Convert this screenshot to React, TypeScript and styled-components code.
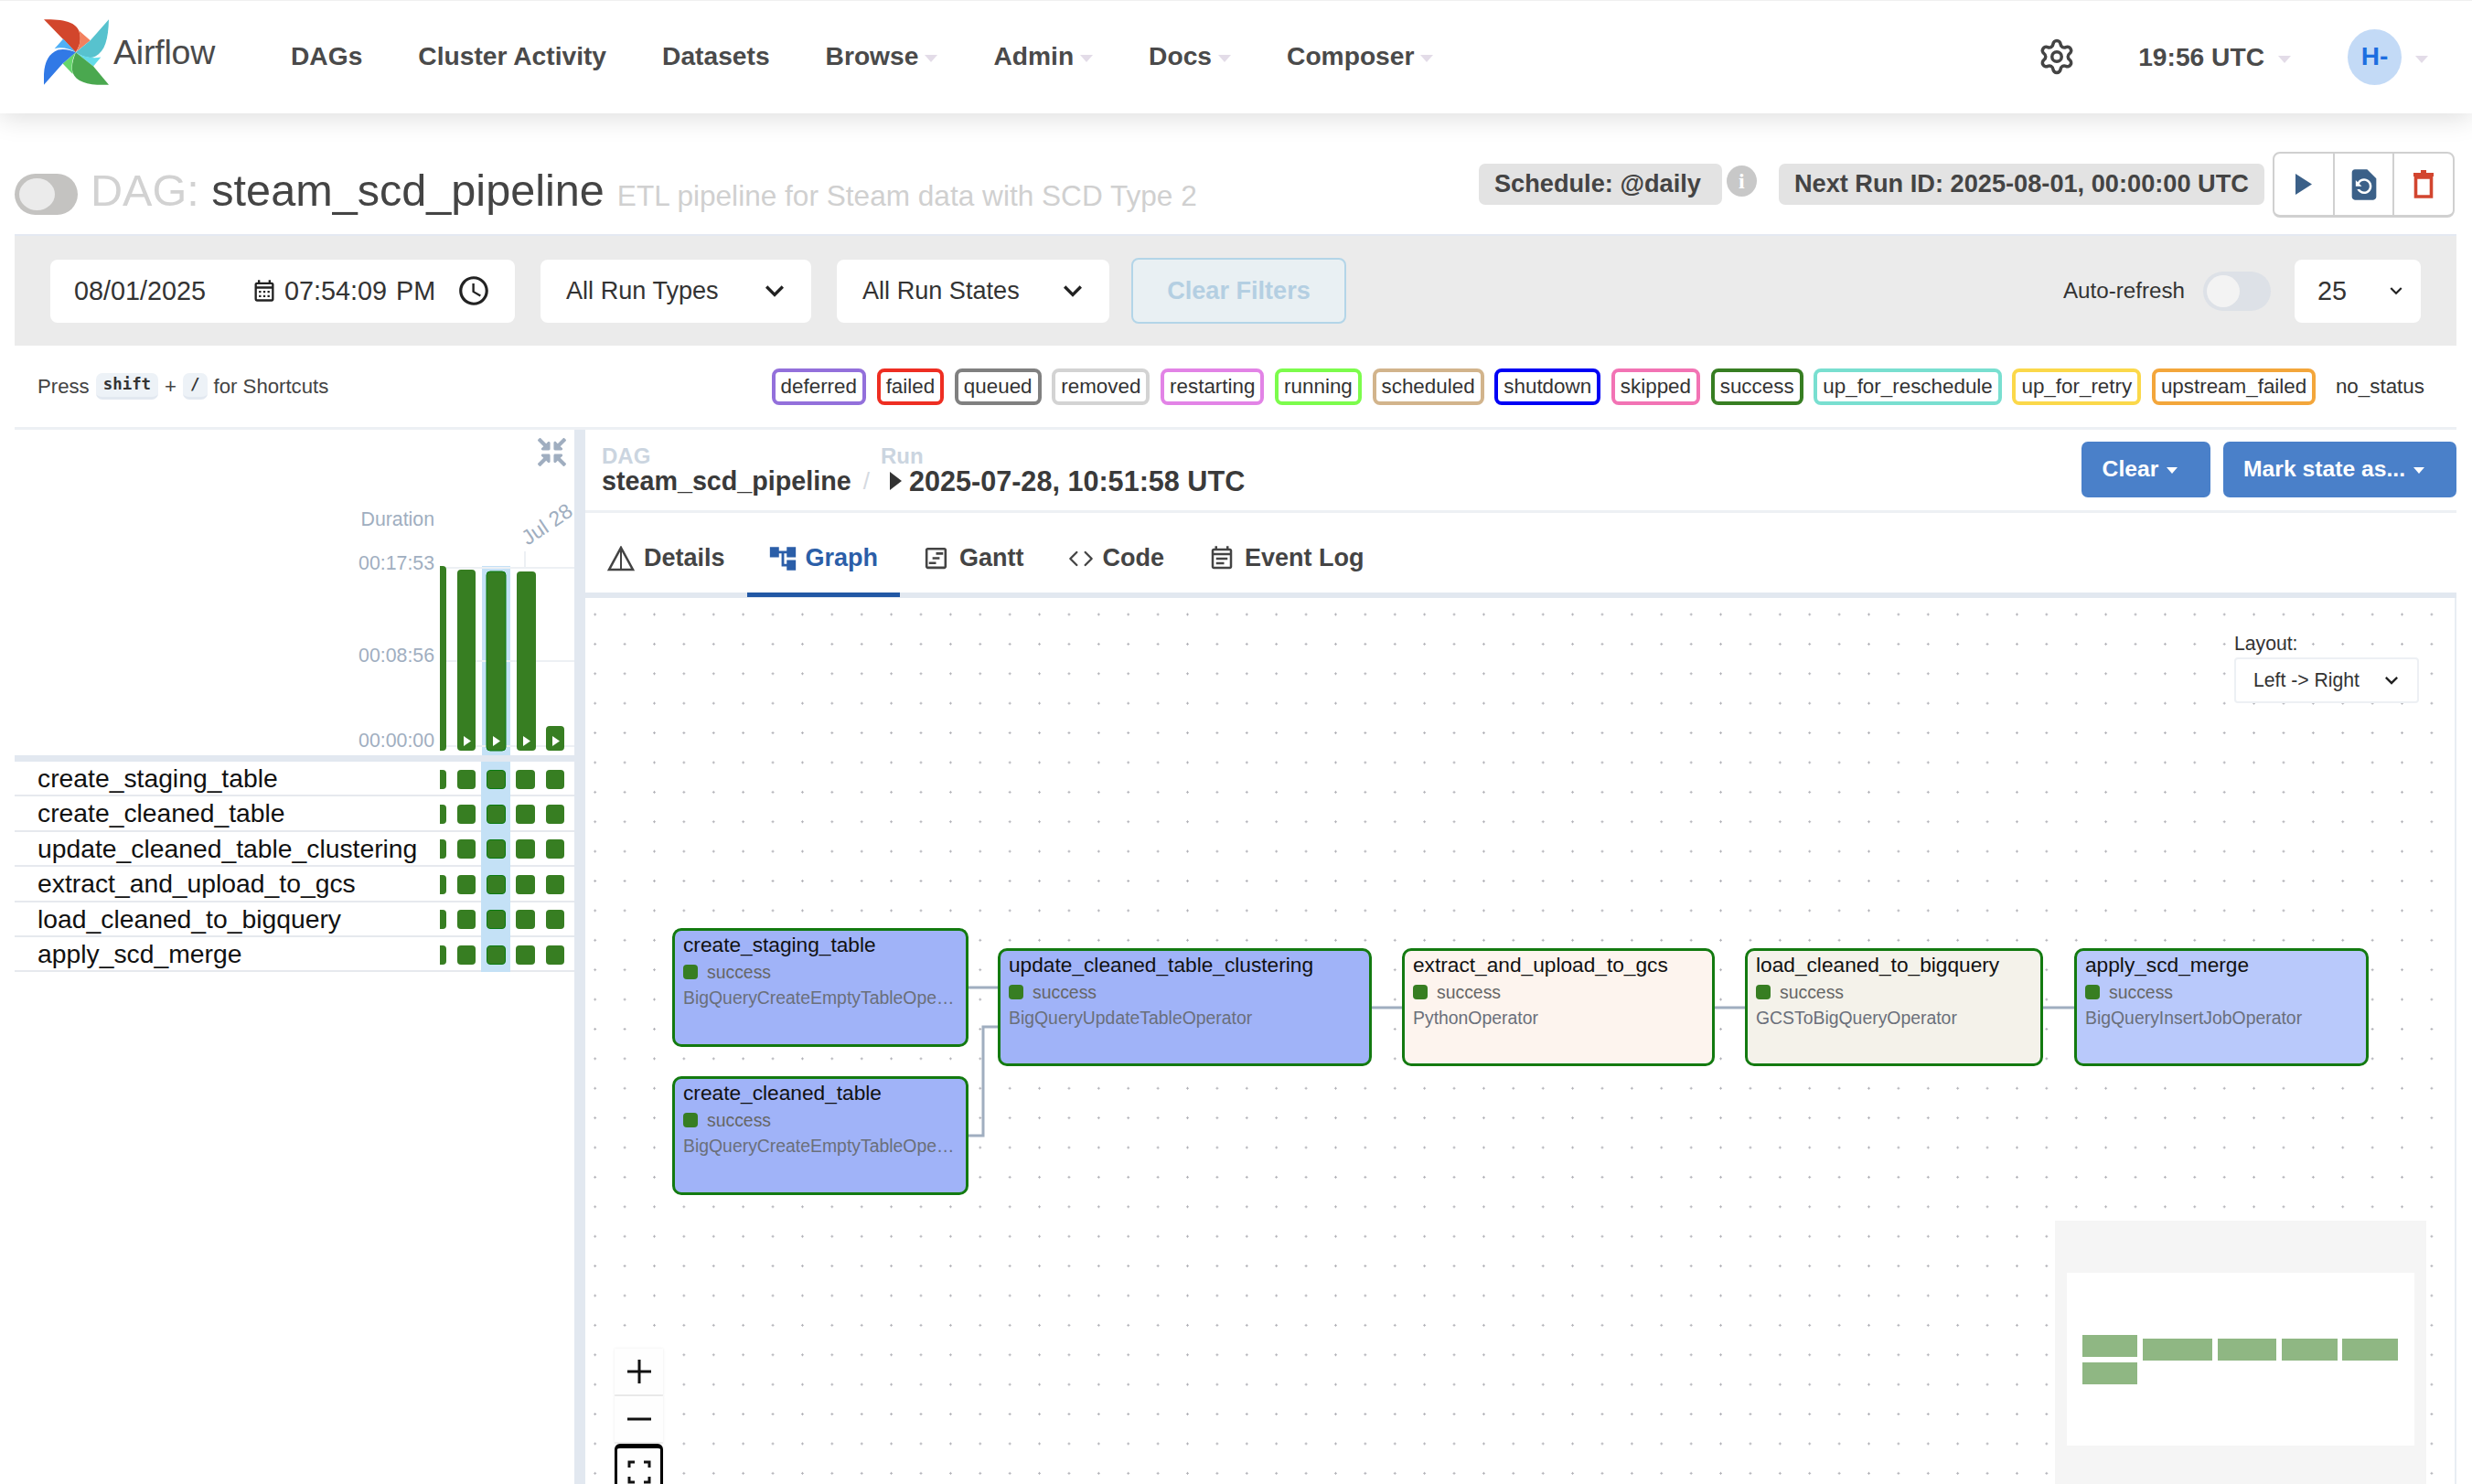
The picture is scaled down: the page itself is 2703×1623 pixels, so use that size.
import React from 'react';
import styled, { createGlobalStyle } from 'styled-components';
import { Settings } from 'lucide-react';
import { FaCompressArrowsAlt } from 'react-icons/fa';
import { FiCode } from 'react-icons/fi';
import {
  MdAccountTree,
  MdOutlineAccessTime,
  MdOutlineCalendarMonth,
  MdOutlineEventNote,
  MdOutlineViewTimeline,
  MdRestorePage,
  MdKeyboardArrowDown,
} from 'react-icons/md';

const GlobalStyle = createGlobalStyle`
  html, body {
    margin: 0;
    padding: 0;
    background: #fff;
    font-family: "Liberation Sans", Arial, sans-serif;
    color: #444;
  }
  * { box-sizing: border-box; }
`;

const Page = styled.div`
  width: 2703px;
  height: 1623px;
  overflow: hidden;
  display: flex;
  flex-direction: column;
`;

const Nav = styled.header`
  height: 124px;
  flex: none;
  display: flex;
  align-items: center;
  padding-left: 48px;
  background: #fff;
  box-shadow: 0 4px 28px rgba(0, 0, 0, 0.14);
  border-top: 1px solid #f0f0f0;
  position: relative;
`;

const Brand = styled.div`
  width: 270px;
  display: flex;
  align-items: center;
  gap: 5px;
  margin-top: -11px;
  font-size: 37.5px;
  color: #4a4a4a;
  letter-spacing: -0.2px;
`;

const NavList = styled.nav`
  display: flex;
  gap: 61px;
  margin-top: -3px;
`;

const NavItem = styled.div`
  display: flex;
  align-items: center;
  font-size: 28.2px;
  font-weight: 700;
  color: #4a4a4a;
`;

const Caret = styled.i`
  display: inline-block;
  width: 0;
  height: 0;
  margin-left: 7px;
  margin-top: 6px;
  border-left: 7px solid transparent;
  border-right: 7px solid transparent;
  border-top: 8px solid #e3dce8;
`;

const NavRight = styled.div`
  margin-left: auto;
  padding-right: 48px;
  display: flex;
  align-items: center;
  margin-top: -1px;
`;

const Clock = styled.div`
  margin-left: 68px;
  display: flex;
  align-items: center;
  font-size: 28.2px;
  font-weight: 700;
  color: #4a4a4a;
  ${Caret} { margin-left: 15px; }
`;

const Avatar = styled.div`
  width: 59px;
  height: 61px;
  margin-left: 62px;
  border-radius: 50%;
  background: #c3daf6;
  color: #1c6ee0;
  font-size: 28px;
  font-weight: 700;
  display: flex;
  align-items: center;
  justify-content: center;
`;

const AvatarCaret = styled(Caret)`
  margin-left: 15px;
`;

const Content = styled.main`
  flex: 1;
  min-height: 0;
  display: flex;
  flex-direction: column;
  padding: 0 17px 0 16px;
`;

const TitleRow = styled.section`
  height: 132px;
  flex: none;
  display: flex;
  align-items: flex-start;
  justify-content: space-between;
`;

const TitleLeft = styled.div`
  display: flex;
  align-items: center;
  height: 60px;
  margin-top: 54px;
`;

const PauseToggle = styled.div`
  width: 69px;
  height: 45px;
  border-radius: 23px;
  background: #c4c3c1;
  padding: 5px;
  margin-right: 14px;
  margin-top: 8px;
  &::before {
    content: '';
    display: block;
    width: 39px;
    height: 35px;
    border-radius: 50%;
    background: #ebebeb;
  }
`;

const Heading = styled.h1`
  margin: 0;
  font-size: 48.6px;
  font-weight: 400;
  color: #444;
  white-space: nowrap;
  span { color: #d2d2d2; }
`;

const Subtitle = styled.small`
  margin-left: 14px;
  margin-top: 12px;
  font-size: 31.6px;
  color: #d0d0d0;
  white-space: nowrap;
`;

const TitleRight = styled.div`
  display: flex;
  align-items: flex-start;
  margin-top: 42px;
  margin-right: 2px;
`;

const Pill = styled.div<{ $trail?: number }>`
  height: 45px;
  margin-top: 13px;
  padding: 0 ${p => p.$trail ?? 17}px 2px 17px;
  border-radius: 7px;
  background: #e3e3e3;
  color: #444;
  font-size: 27.2px;
  font-weight: 700;
  display: flex;
  align-items: center;
  white-space: nowrap;
`;

const InfoDot = styled.div`
  width: 33px;
  height: 34px;
  margin: 15px 24px 0 5px;
  border-radius: 50%;
  background: #c8c8c8;
  color: #fff;
  font-size: 24px;
  font-family: "Liberation Serif", serif;
  font-weight: 700;
  display: flex;
  align-items: center;
  justify-content: center;
`;

const ActionGroup = styled.div`
  margin-left: 9px;
  width: 199px;
  height: 72px;
  display: flex;
  border: 2px solid #d0d0d0;
  border-bottom-width: 3px;
  border-radius: 8px;
`;

const ActionButton = styled.div`
  flex: 1;
  display: flex;
  align-items: center;
  justify-content: center;
  & + & { border-left: 2px solid #d0d0d0; }
`;

const FilterBar = styled.section`
  height: 122px;
  flex: none;
  display: flex;
  align-items: center;
  padding: 0 39px;
  background: #ebebeb;
  border-top: 2px solid #e4e9f2;
`;

const DateField = styled.div`
  width: 508px;
  height: 69px;
  padding-left: 26px;
  border-radius: 8px;
  background: #fff;
  color: #333;
  font-size: 28.8px;
  display: flex;
  align-items: center;
  svg { flex: none; color: #222; }
`;

const DateText = styled.span`
  width: 194px;
`;

const TimeText = styled.span`
  width: 188px;
  margin-left: 8px;
  word-spacing: 2px;
`;

const SelectBox = styled.div<{ $width: number }>`
  width: ${p => p.$width}px;
  height: 69px;
  margin-left: 28px;
  padding: 0 20px 0 28px;
  border-radius: 8px;
  background: #fff;
  color: #333;
  font-size: 27.1px;
  display: flex;
  align-items: center;
  justify-content: space-between;
`;

const ClearFilters = styled.button`
  width: 235px;
  height: 72px;
  margin-left: 24px;
  border: 2px solid #b3d5e8;
  border-radius: 8px;
  background: #e9f0f3;
  color: #b4cfe2;
  font-family: inherit;
  font-size: 27.1px;
  font-weight: 700;
`;

const AutoRefresh = styled.div`
  margin-left: auto;
  display: flex;
  align-items: center;
  font-size: 24.2px;
  color: #333;
`;

const AutoSwitch = styled.div`
  width: 74px;
  height: 43px;
  margin-left: 20px;
  padding: 4px;
  border-radius: 22px;
  background: #dde1e7;
  &::before {
    content: '';
    display: block;
    width: 36px;
    height: 35px;
    border-radius: 50%;
    background: #f3f3f3;
  }
`;

const PageSize = styled.div`
  width: 138px;
  height: 69px;
  margin-left: 26px;
  padding: 0 14px 0 25px;
  border-radius: 8px;
  background: #fff;
  color: #333;
  font-size: 28.8px;
  display: flex;
  align-items: center;
  justify-content: space-between;
`;

const LegendRow = styled.section`
  height: 92px;
  flex: none;
  display: flex;
  align-items: center;
  justify-content: space-between;
  padding: 0 25px 0 25px;
  border-bottom: 3px solid #edf0f4;
`;

const Shortcuts = styled.div`
  display: flex;
  align-items: center;
  gap: 7px;
  font-size: 22.2px;
  color: #444;
`;

const Kbd = styled.kbd`
  padding: 2px 8px 4px;
  border-radius: 7px;
  background: #edf2f7;
  border-bottom: 3px solid #e2e8f0;
  font-family: "DejaVu Sans Mono", monospace;
  font-size: 17.4px;
  font-weight: 700;
  color: #333;
`;

const Legend = styled.div`
  display: flex;
  align-items: center;
  gap: 11.7px;
`;

const Chip = styled.span<{ $color?: string }>`
  height: 40px;
  padding: 0 6px;
  border: 4px solid ${p => p.$color ?? 'transparent'};
  border-radius: 8px;
  font-size: 22.4px;
  color: #333;
  display: flex;
  align-items: center;
`;

const Main = styled.section`
  flex: 1;
  min-height: 0;
  display: flex;
`;

const LeftPanel = styled.aside`
  width: 612px;
  flex: none;
  display: flex;
  flex-direction: column;
`;

const ChartArea = styled.div`
  height: 363px;
  flex: none;
  position: relative;
  border-bottom: 7px solid #e2e8f0;
  svg.chart { display: block; }
`;

const CollapseIcon = styled.div`
  position: absolute;
  top: 9px;
  right: 9px;
  color: #a0aec0;
  line-height: 0;
`;

const TaskRow = styled.div`
  height: 38.4px;
  flex: none;
  display: flex;
  justify-content: space-between;
  padding-left: 25px;
  padding-right: 5px;
  border-bottom: 2px solid #e6e9ee;
`;

const TaskName = styled.span`
  font-size: 28.3px;
  line-height: 36px;
  color: #111;
`;

const Cells = styled.div`
  width: 142px;
  display: flex;
  justify-content: flex-end;
  overflow: hidden;
  margin-bottom: -2px;
`;

const Cell = styled.div<{ $active?: boolean }>`
  width: 32.3px;
  flex: none;
  display: flex;
  align-items: center;
  justify-content: center;
  background: ${p => (p.$active ? '#c4e1f6' : 'transparent')};
`;

const Square = styled.div<{ $active?: boolean }>`
  width: 20.5px;
  height: 21px;
  border-radius: 4px;
  background: #377e22;
  border: ${p => (p.$active ? '1px solid #0a7a10' : 'none')};
`;

const PanelDivider = styled.div`
  width: 12px;
  flex: none;
  background: #e2e8f0;
`;

const RightPanel = styled.div`
  flex: 1;
  min-width: 0;
  display: flex;
  flex-direction: column;
`;

const RunHeader = styled.div`
  height: 91px;
  flex: none;
  display: flex;
  align-items: center;
  justify-content: space-between;
  padding-left: 18px;
  border-bottom: 3px solid #edf0f4;
`;

const Crumbs = styled.div`
  display: flex;
  margin-top: 1px;
`;

const Crumb = styled.div`
  display: flex;
  flex-direction: column;
`;

const CrumbLabel = styled.span`
  font-size: 24px;
  line-height: 25px;
  margin-bottom: -2px;
  font-weight: 700;
  color: #cbd5e0;
`;

const CrumbValue = styled.span`
  font-size: 28.7px;
  line-height: 35px;
  font-weight: 700;
  color: #3a3a3a;
  display: flex;
  align-items: center;
  white-space: nowrap;
`;

const RunDate = styled.span`
  font-size: 30.6px;
`;

const CrumbSlash = styled.span`
  align-self: flex-end;
  margin: 0 12px 0 13px;
  font-size: 26px;
  line-height: 35px;
  color: #d5dae1;
`;

const RunArrow = styled.i`
  width: 0;
  height: 0;
  margin: 0 8px 0 10px;
  border-top: 10px solid transparent;
  border-bottom: 10px solid transparent;
  border-left: 13px solid #333;
`;

const RunActions = styled.div`
  display: flex;
  gap: 14px;
  margin-top: -2px;
`;

const BlueButton = styled.button<{ $width: number }>`
  width: ${p => p.$width}px;
  height: 61px;
  padding: 0 13px 0 0;
  border: 0;
  border-radius: 7px;
  background: #4a80c9;
  color: #fff;
  font-family: inherit;
  font-size: 24.7px;
  font-weight: 700;
  display: flex;
  align-items: center;
  justify-content: center;
  ${Caret} {
    margin-left: 9px;
    margin-top: 3px;
    border-left-width: 6px;
    border-right-width: 6px;
    border-top: 7px solid #fff;
  }
`;

const Tabs = styled.div`
  height: 93px;
  flex: none;
  display: flex;
  border-bottom: 6px solid #e2e8f0;
`;

const Tab = styled.div<{ $active?: boolean }>`
  height: 92px;
  padding: 12px 24px 0 26px;
  display: flex;
  align-items: center;
  gap: 12px;
  font-size: 27px;
  font-weight: 700;
  color: ${p => (p.$active ? '#2b5ea8' : '#444')};
  border-bottom: 5px solid ${p => (p.$active ? '#2258a5' : 'transparent')};
  svg { margin: 0 -2px; }
`;

const TreeIcon = styled(MdAccountTree)`
  && { margin: 0 -4px; }
`;

const Canvas = styled.div`
  flex: 1;
  min-height: 0;
  position: relative;
  overflow: hidden;
  margin-left: 2px;
  border-right: 2px solid #e8edf3;
  background-color: #fff;
  background-image: radial-gradient(circle, #b1b1b7 1.1px, transparent 1.3px);
  background-size: 32.4px 32.4px;
  background-position: -7.5px 1.8px;
`;

const EdgeLayer = styled.svg`
  position: absolute;
  inset: 0;
`;

const NodeBox = styled.div<{ $fill: string }>`
  position: absolute;
  padding: 1px 9px;
  border: 3px solid #137a10;
  border-radius: 10px;
  background: ${p => p.$fill};
  color: #111;
  overflow: hidden;
`;

const NodeTitle = styled.div`
  font-size: 22.7px;
  line-height: 28px;
  white-space: nowrap;
`;

const NodeState = styled.div`
  display: flex;
  align-items: center;
  gap: 10px;
  margin-top: 2px;
  height: 28px;
  font-size: 19.4px;
  color: #666;
  &::before {
    content: '';
    width: 16px;
    height: 16px;
    border-radius: 4px;
    background: #377e22;
  }
`;

const NodeOperator = styled.div`
  font-size: 19.4px;
  line-height: 28px;
  color: #6a6f7a;
  white-space: nowrap;
  overflow: hidden;
  text-overflow: ellipsis;
`;

const LayoutControl = styled.div`
  position: absolute;
  top: 38px;
  left: 1801px;
  font-size: 21.2px;
  color: #333;
`;

const LayoutSelect = styled.div`
  width: 202px;
  height: 50px;
  margin-top: 3px;
  padding: 0 14px 0 19px;
  border: 2px solid #edf0f4;
  border-radius: 4px;
  background: #fff;
  display: flex;
  align-items: center;
  justify-content: space-between;
`;

const ZoomControls = styled.div`
  position: absolute;
  left: 30px;
  top: 821px;
  width: 53px;
  display: flex;
  flex-direction: column;
`;

const ZoomButton = styled.div<{ $focus?: boolean }>`
  height: 52px;
  display: flex;
  align-items: center;
  justify-content: center;
  background: #fefefe;
  border-bottom: 2px solid #eee;
  box-shadow: 0 0 3px rgba(0, 0, 0, 0.08);
  ${p => p.$focus && 'height: 60px; border: 3px solid #000; border-top-width: 5px; border-radius: 6px;'}
`;

const MiniMap = styled.svg`
  position: absolute;
  left: 1605px;
  top: 681px;
`;

const Logo = () => (
  <svg width="71" height="72" viewBox="143 60 214 215">
    <path d="M143 60C205 60 255 65 262 110C266 135 258 150 248 168Z" fill="#d2462c" />
    <path d="M258 96L296 129L250 166C262 145 266 120 258 96Z" fill="#f3815f" />
    <path d="M357 60C355 125 345 165 312 182C290 192 268 180 248 168L296 129Z" fill="#57c2ce" />
    <path d="M248 168C270 182 300 190 331 184L306 214Z" fill="#64dcea" />
    <path d="M357 275C295 278 250 268 238 235C232 212 240 190 248 168L306 214Z" fill="#4aa84f" />
    <path d="M248 168C236 190 232 215 238 240L205 205Z" fill="#66d66c" />
    <path d="M143 275C140 215 150 175 190 160C212 155 232 162 248 168L205 205Z" fill="#3179e6" />
    <path d="M248 168C225 155 200 150 178 156L207 124Z" fill="#4fb0f6" />
  </svg>
);

const legend: [string, string | undefined][] = [
  ['deferred', '#9370db'],
  ['failed', '#ee2e22'],
  ['queued', '#808080'],
  ['removed', '#d3d3d3'],
  ['restarting', '#e283e6'],
  ['running', '#7cfc4c'],
  ['scheduled', '#d2b48c'],
  ['shutdown', '#0000f5'],
  ['skipped', '#f273b4'],
  ['success', '#377e22'],
  ['up_for_reschedule', '#79dfd0'],
  ['up_for_retry', '#fbd84a'],
  ['upstream_failed', '#f3a63b'],
  ['no_status', undefined],
];

const tasks = [
  'create_staging_table',
  'create_cleaned_table',
  'update_cleaned_table_clustering',
  'extract_and_upload_to_gcs',
  'load_cleaned_to_bigquery',
  'apply_scd_merge',
];

const nodes = [
  { name: 'create_staging_table', op: 'BigQueryCreateEmptyTableOperator', x: 93, y: 361, w: 324, h: 130, fill: '#a0b3f8' },
  { name: 'create_cleaned_table', op: 'BigQueryCreateEmptyTableOperator', x: 93, y: 523, w: 324, h: 130, fill: '#a0b3f8' },
  { name: 'update_cleaned_table_clustering', op: 'BigQueryUpdateTableOperator', x: 449, y: 383, w: 409, h: 129, fill: '#a0b3f8' },
  { name: 'extract_and_upload_to_gcs', op: 'PythonOperator', x: 891, y: 383, w: 342, h: 129, fill: '#fdf4ee' },
  { name: 'load_cleaned_to_bigquery', op: 'GCSToBigQueryOperator', x: 1266, y: 383, w: 326, h: 129, fill: '#f4f2ea' },
  { name: 'apply_scd_merge', op: 'BigQueryInsertJobOperator', x: 1626, y: 383, w: 322, h: 129, fill: '#b9c9fb' },
];

const edges = [
  'M416 426H450',
  'M416 588H433V469H450',
  'M856 448H891',
  'M1231 448H1267',
  'M1591 448H1627',
];

const bars = [
  { x: 465, w: 23, y: 619, active: false },
  { x: 500, w: 20, y: 623, active: false },
  { x: 532, w: 21, y: 625, active: true },
  { x: 565, w: 21, y: 625, active: false },
  { x: 597, w: 20, y: 794, active: false },
];

// top of the svg sits at y=470 on the page, left at x=16
const DurationChart = () => (
  <svg className="chart" width="612" height="356" viewBox="16 470 612 356">
    <rect x="527" y="619" width="31" height="207" fill="#c4e1f6" />
    {[621, 723, 816].map(y => (
      <line key={y} x1="481" x2="628" y1={y} y2={y} stroke="#edf0f4" strokeWidth="2" />
    ))}
    <line x1="574" x2="574" y1="603" y2="621" stroke="#edf0f4" strokeWidth="2" />
    <g fill="#a0aec0" fontSize="21.3" textAnchor="end">
      <text x="475" y="575">Duration</text>
      <text x="475" y="623">00:17:53</text>
      <text x="475" y="724">00:08:56</text>
      <text x="475" y="817">00:00:00</text>
    </g>
    <clipPath id="barsClip"><rect x="481" y="600" width="147" height="226" /></clipPath>
    <g clipPath="url(#barsClip)">
      {bars.map(b => (
        <g key={b.x}>
          <rect x={b.x} y={b.y} width={b.w} height={821 - b.y} rx="4" fill="#377e22" stroke={b.active ? '#0a7a10' : 'none'} />
          {b.x > 480 && <path d={`M${b.x + 7} 805V816L${b.x + 15} 810.5Z`} fill="#fff" />}
        </g>
      ))}
    </g>
    <text x="0" y="0" fill="#a0aec0" fontSize="23" transform="translate(577 597) rotate(-34)">Jul 28,</text>
  </svg>
);

export default function App() {
  return (
    <Page>
      <GlobalStyle />
      <Nav>
        <Brand>
          <Logo />
          <span>Airflow</span>
        </Brand>
        <NavList>
          <NavItem>DAGs</NavItem>
          <NavItem>Cluster Activity</NavItem>
          <NavItem>Datasets</NavItem>
          <NavItem>Browse<Caret /></NavItem>
          <NavItem>Admin<Caret /></NavItem>
          <NavItem>Docs<Caret /></NavItem>
          <NavItem>Composer<Caret /></NavItem>
        </NavList>
        <NavRight>
          <Settings size={42} color="#444" strokeWidth={2} />
          <Clock>19:56 UTC<Caret /></Clock>
          <Avatar>H-</Avatar>
          <AvatarCaret />
        </NavRight>
      </Nav>
      <Content>
        <TitleRow>
          <TitleLeft>
            <PauseToggle />
            <Heading><span>DAG: </span>steam_scd_pipeline</Heading>
            <Subtitle>ETL pipeline for Steam data with SCD Type 2</Subtitle>
          </TitleLeft>
          <TitleRight>
            <Pill $trail={23}>Schedule: @daily</Pill>
            <InfoDot>i</InfoDot>
            <Pill>Next Run ID: 2025-08-01, 00:00:00 UTC</Pill>
            <ActionGroup>
              <ActionButton>
                <svg width="18" height="23" viewBox="0 0 18 23"><path d="M0 0L18 11.5L0 23Z" fill="#3b6088" /></svg>
              </ActionButton>
              <ActionButton><MdRestorePage size={40} color="#3b6088" /></ActionButton>
              <ActionButton>
                <svg width="22" height="31" viewBox="0 0 22 31">
                  <path d="M2.5 8H19.5V29H2.5Z" fill="none" stroke="#d2452f" strokeWidth="3.6" />
                  <path d="M0 3H22V7H0ZM8 0H14V3H8Z" fill="#d2452f" />
                </svg>
              </ActionButton>
            </ActionGroup>
          </TitleRight>
        </TitleRow>
        <FilterBar>
          <DateField>
            <DateText>08/01/2025</DateText>
            <MdOutlineCalendarMonth size={28} />
            <TimeText>07:54:09 PM</TimeText>
            <MdOutlineAccessTime size={38} />
          </DateField>
          <SelectBox $width={296}>All Run Types<MdKeyboardArrowDown size={40} color="#222" /></SelectBox>
          <SelectBox $width={298}>All Run States<MdKeyboardArrowDown size={40} color="#222" /></SelectBox>
          <ClearFilters>Clear Filters</ClearFilters>
          <AutoRefresh>Auto-refresh<AutoSwitch /></AutoRefresh>
          <PageSize>25<MdKeyboardArrowDown size={26} color="#222" /></PageSize>
        </FilterBar>
        <LegendRow>
          <Shortcuts>
            Press <Kbd>shift</Kbd> + <Kbd>/</Kbd> for Shortcuts
          </Shortcuts>
          <Legend>
            {legend.map(([label, color]) => (
              <Chip key={label} $color={color}>{label}</Chip>
            ))}
          </Legend>
        </LegendRow>
        <Main>
          <LeftPanel>
            <ChartArea>
              <DurationChart />
              <CollapseIcon><FaCompressArrowsAlt size={31} /></CollapseIcon>
            </ChartArea>
            {tasks.map(task => (
              <TaskRow key={task}>
                <TaskName>{task}</TaskName>
                <Cells>
                  {[0, 1, 2, 3, 4].map(i => (
                    <Cell key={i} $active={i === 2}>
                      <Square $active={i === 2} />
                    </Cell>
                  ))}
                </Cells>
              </TaskRow>
            ))}
          </LeftPanel>
          <PanelDivider />
          <RightPanel>
            <RunHeader>
              <Crumbs>
                <Crumb>
                  <CrumbLabel>DAG</CrumbLabel>
                  <CrumbValue>steam_scd_pipeline</CrumbValue>
                </Crumb>
                <CrumbSlash>/</CrumbSlash>
                <Crumb>
                  <CrumbLabel>Run</CrumbLabel>
                  <CrumbValue><RunArrow /><RunDate>2025-07-28, 10:51:58 UTC</RunDate></CrumbValue>
                </Crumb>
              </Crumbs>
              <RunActions>
                <BlueButton $width={141}>Clear<Caret /></BlueButton>
                <BlueButton $width={255}>Mark state as...<Caret /></BlueButton>
              </RunActions>
            </RunHeader>
            <Tabs>
              <Tab>
                <svg width="30" height="28" viewBox="0 0 30 28">
                  <path d="M15 2L28 26H2Z" fill="none" stroke="#444" strokeWidth="2.6" />
                  <path d="M15 4V26" stroke="#444" strokeWidth="2" />
                </svg>
                Details
              </Tab>
              <Tab $active>
                <TreeIcon size={34} />
                Graph
              </Tab>
              <Tab><MdOutlineViewTimeline size={31} />Gantt</Tab>
              <Tab><FiCode size={28} />Code</Tab>
              <Tab><MdOutlineEventNote size={30} />Event Log</Tab>
            </Tabs>
            <Canvas>
              <EdgeLayer width="2042" height="969">
                {edges.map(d => (
                  <path key={d} d={d} fill="none" stroke="#a0aec0" strokeWidth="3" />
                ))}
              </EdgeLayer>
              {nodes.map(n => (
                <NodeBox key={n.name} $fill={n.fill} style={{ left: n.x, top: n.y, width: n.w, height: n.h }}>
                  <NodeTitle>{n.name}</NodeTitle>
                  <NodeState>success</NodeState>
                  <NodeOperator>{n.op}</NodeOperator>
                </NodeBox>
              ))}
              <LayoutControl>
                Layout:
                <LayoutSelect>Left -&gt; Right<MdKeyboardArrowDown size={28} color="#222" /></LayoutSelect>
              </LayoutControl>
              <ZoomControls>
                <ZoomButton>
                  <svg width="26" height="26" viewBox="0 0 26 26"><path d="M13 0V26M0 13H26" stroke="#111" strokeWidth="3" /></svg>
                </ZoomButton>
                <ZoomButton>
                  <svg width="26" height="4" viewBox="0 0 26 4"><path d="M0 2H26" stroke="#111" strokeWidth="3" /></svg>
                </ZoomButton>
                <ZoomButton $focus>
                  <svg width="26" height="26" viewBox="0 0 26 26">
                    <path d="M2 8V2H8M18 2H24V8M24 18V24H18M8 24H2V18" fill="none" stroke="#111" strokeWidth="3" />
                  </svg>
                </ZoomButton>
              </ZoomControls>
              <MiniMap width="406" height="288" viewBox="2248 1335 406 288">
                <rect x="2248" y="1335" width="406" height="288" fill="#f5f5f5" />
                <rect x="2261" y="1392" width="380" height="189" fill="#fff" />
                <g fill="#8fb783">
                  <rect x="2278" y="1460" width="60" height="24" />
                  <rect x="2278" y="1490" width="60" height="24" />
                  <rect x="2344" y="1464" width="76" height="24" />
                  <rect x="2426" y="1464" width="64" height="24" />
                  <rect x="2496" y="1464" width="61" height="24" />
                  <rect x="2562" y="1464" width="61" height="24" />
                </g>
              </MiniMap>
            </Canvas>
          </RightPanel>
        </Main>
      </Content>
    </Page>
  );
}
